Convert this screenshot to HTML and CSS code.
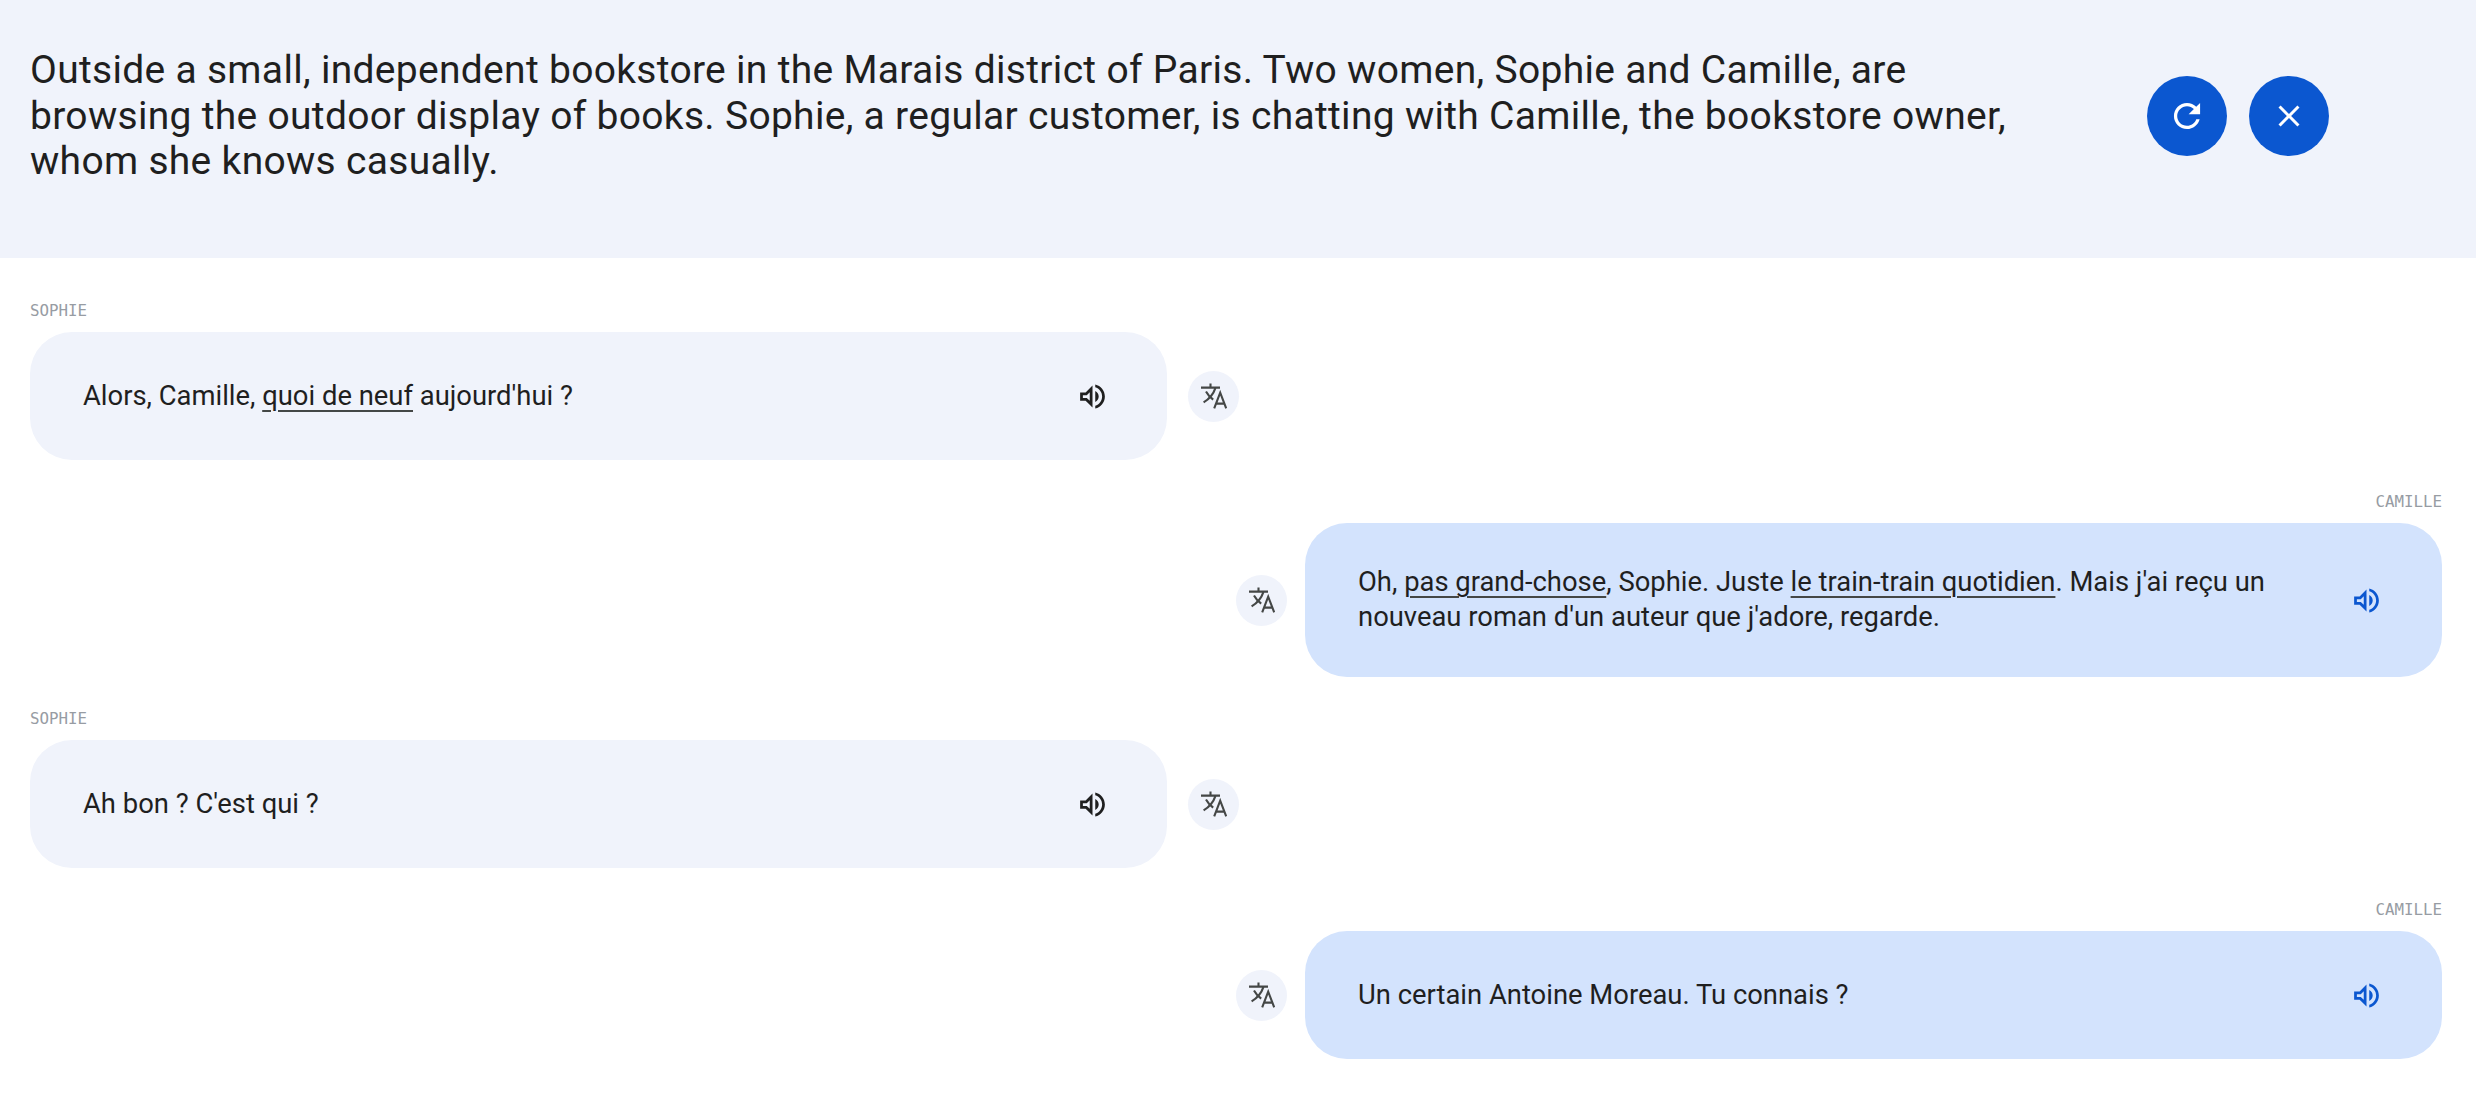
FILE: index.html
```html
<!DOCTYPE html>
<html lang="fr">
<head>
<meta charset="utf-8">
<title>Conversation</title>
<link rel="stylesheet" href="styles.css">
</head>
<body>
<svg class="defs" width="0" height="0" aria-hidden="true">
  <symbol id="vol" viewBox="0 0 24 24"><path d="M3 9v6h4l5 5V4L7 9H3zm7-.17v6.34L7.83 13H5v-2h2.83L10 8.83zM16.5 12c0-1.77-1.02-3.29-2.5-4.03v8.05c1.48-.73 2.5-2.25 2.5-4.02zM14 3.23v2.06c2.89.86 5 3.54 5 6.71s-2.11 5.85-5 6.71v2.06c4.01-.91 7-4.49 7-8.77 0-4.28-2.99-7.86-7-8.77z"/></symbol>
  <symbol id="tr" viewBox="0 0 26 26"><path class="tr-stroke" d="M0 4.6H19M9.5 .6V4.6M14.6 4.6C12.8 10 9 15.5 2.6 19.4M5 8.4C6.6 11.4 9 14.2 12.2 16.6M13.2 25.4 19.2 9.6 25.2 25.4M15 20.6H23.4"/></symbol>
</svg>
<header class="scene">
  <p class="scene-text">Outside a small, independent bookstore in the Marais district of Paris. Two women, Sophie and Camille, are browsing the outdoor display of books. Sophie, a regular customer, is chatting with Camille, the bookstore owner, whom she knows casually.</p>
  <div class="scene-actions">
    <button class="round"><svg viewBox="1 1 22 22"><path d="M17.65 6.35C16.2 4.9 14.21 4 12 4c-4.42 0-7.99 3.58-7.99 8s3.57 8 7.99 8c3.73 0 6.84-2.55 7.73-6h-2.08c-.82 2.33-3.04 4-5.65 4-3.31 0-6-2.69-6-6s2.69-6 6-6c1.66 0 3.14.69 4.22 1.78L13 11h7V4l-2.35 2.35z"/></svg></button>
    <button class="round"><svg viewBox="0 0 24 24"><path d="M19 6.41 17.59 5 12 10.59 6.41 5 5 6.41 10.59 12 5 17.59 6.41 19 12 13.41 17.59 19 19 17.59 13.41 12z"/></svg></button>
  </div>
</header>
<main class="chat">
  <section class="turn left">
    <div class="name">SOPHIE</div>
    <div class="row">
      <div class="bubble"><p>Alors, Camille, <u>quoi de neuf</u> aujourd'hui ?</p><svg class="speak"><use href="#vol"/></svg></div>
      <button class="tr"><svg><use href="#tr"/></svg></button>
    </div>
  </section>
  <section class="turn right">
    <div class="name">CAMILLE</div>
    <div class="row">
      <button class="tr"><svg><use href="#tr"/></svg></button>
      <div class="bubble"><p>Oh, <u>pas grand-chose</u>, Sophie. Juste <u>le train-train quotidien</u>. Mais j'ai reçu un nouveau roman d'un auteur que j'adore, regarde.</p><svg class="speak"><use href="#vol"/></svg></div>
    </div>
  </section>
  <section class="turn left">
    <div class="name">SOPHIE</div>
    <div class="row">
      <div class="bubble"><p>Ah bon ? C'est qui ?</p><svg class="speak"><use href="#vol"/></svg></div>
      <button class="tr"><svg><use href="#tr"/></svg></button>
    </div>
  </section>
  <section class="turn right">
    <div class="name">CAMILLE</div>
    <div class="row">
      <button class="tr"><svg><use href="#tr"/></svg></button>
      <div class="bubble"><p>Un certain Antoine Moreau. Tu connais ?</p><svg class="speak"><use href="#vol"/></svg></div>
    </div>
  </section>
</main>
</body>
</html>
```
FILE: styles.css
```css
* { box-sizing: border-box; }
html, body { margin: 0; background: #fff; }
body { font-family: Roboto, "Noto Sans", sans-serif; color: #1f1f1f; height: 1096px; overflow: hidden; }
.defs { position: absolute; }
.scene { height: 258px; background: #f0f3fb; display: flex; padding: 48px 147px 0 30px; justify-content: space-between; }
.scene-text { margin: 0; width: 2010px; font-size: 39px; line-height: 45.7px; font-weight: 450; letter-spacing: .3px; }
.scene-actions { display: flex; gap: 22px; padding-top: 28px; }
.round { width: 80px; height: 80px; border: 0; border-radius: 50%; background: #0b57d0; padding: 0; display: flex; align-items: center; justify-content: center; }
.round svg { width: 36px; height: 36px; fill: #fff; }
.chat { padding: 43px 34px 0 30px; display: flex; flex-direction: column; gap: 32px; }
.turn { display: flex; flex-direction: column; }
.name { font-family: "DejaVu Sans Mono", monospace; font-size: 15.8px; line-height: 20px; color: #979ca3; margin-bottom: 11px; }
.right .name { text-align: right; }
.row { display: flex; align-items: center; gap: 21px; }
.right .row { justify-content: flex-end; gap: 18px; }
.bubble { width: 1137px; min-height: 128px; border-radius: 42px; background: #f0f3fb; padding: 42px 53px; display: flex; align-items: center; justify-content: space-between; gap: 40px; }
.right .bubble { background: #d3e3fd; }
.bubble p { margin: 0; font-size: 27.4px; line-height: 35px; flex: 1; }
.bubble u { text-decoration-color: #444746; text-decoration-thickness: 2px; text-underline-offset: 5px; }
.speak { width: 33px; height: 33px; flex: none; fill: #1f1f1f; margin-right: 5px; }
.right .speak { fill: #0b57d0; margin-right: 6px; }
.tr { width: 51px; height: 51px; border: 0; border-radius: 50%; background: #f0f3fb; padding: 0; display: flex; align-items: center; justify-content: center; }
.tr svg { width: 26px; height: 26px; }
.tr-stroke { fill: none; stroke: #444746; stroke-width: 2.1; }
```
